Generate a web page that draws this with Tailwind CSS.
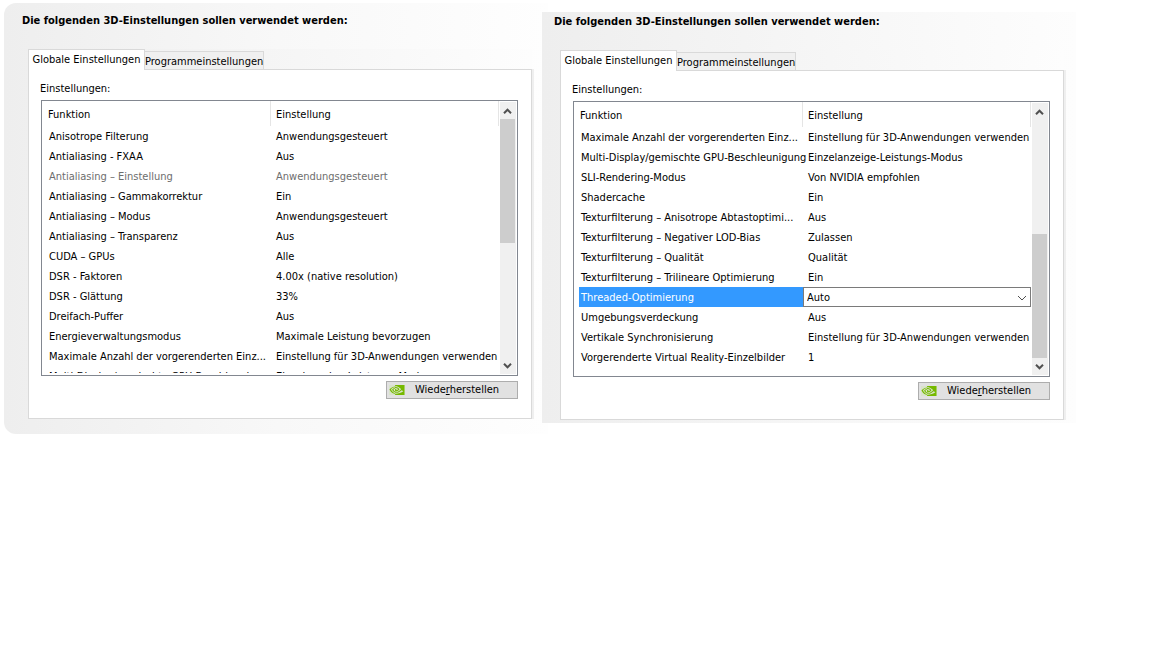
<!DOCTYPE html>
<html lang="de">
<head>
<meta charset="utf-8">
<meta name="viewport" content="width=device-width, initial-scale=1">
<title>3D-Einstellungen verwalten</title>
<script src="https://cdn.jsdelivr.net/npm/@tailwindcss/browser@4"></script>
</head>
<body class="bg-white text-black font-['DejaVu_Sans_Condensed','DejaVu_Sans',sans-serif] text-[11px] leading-[14px]">
<svg class="hidden" aria-hidden="true">
  <symbol id="nvidia" viewBox="0 4 24 16">
    <path fill="#76b900" d="M8.948 8.798v-1.43a6.7 6.7 0 0 1 .424-.018c3.922-.124 6.493 3.374 6.493 3.374s-2.774 3.851-5.75 3.851c-.398 0-.787-.062-1.158-.185v-4.346c1.528.185 1.837.857 2.747 2.385l2.04-1.714s-1.492-1.952-4-1.952a6.016 6.016 0 0 0-.796.035m0-4.735v2.138l.424-.027c5.45-.185 9.01 4.47 9.01 4.47s-4.08 4.964-8.33 4.964c-.37 0-.733-.035-1.095-.097v1.325c.3.035.61.062.91.062 3.957 0 6.82-2.023 9.593-4.408.459.371 2.34 1.263 2.73 1.652-2.633 2.208-8.772 3.984-12.253 3.984-.335 0-.653-.018-.971-.053v1.864H24V4.063zm0 10.326v1.131c-3.657-.654-4.673-4.46-4.673-4.46s1.758-1.944 4.673-2.262v1.237H8.94c-1.528-.186-2.73 1.245-2.73 1.245s.68 2.412 2.739 3.11M2.456 10.9s2.164-3.197 6.5-3.533V6.201C4.153 6.59 0 10.653 0 10.653s2.35 6.802 8.948 7.42v-1.237c-4.84-.6-6.492-5.936-6.492-5.936z"/>
  </symbol>
  <symbol id="up" viewBox="0 0 9 6"><path fill="none" stroke="#505050" stroke-width="2" d="M1 5.200 4.500 1.700l3.500 3.500"/></symbol>
  <symbol id="down" viewBox="0 0 9 6"><path fill="none" stroke="#505050" stroke-width="2" d="M1 .8l3.500 3.500L8 .8"/></symbol>
</svg>
<main class="grid grid-cols-[538fr_534fr] items-start pl-1 pr-[76px] pt-[3px]">

  <section class="-mr-[6px] rounded-l-xl bg-linear-to-r from-[#eeeeee] via-[#f8f8f8] to-[#fefefe] pt-[11px] pb-[15px] pl-6 pr-4">
    <h2 class="-ml-[6px] font-bold">Die folgenden 3D-Einstellungen sollen verwendet werden:</h2>
    <div role="tablist" class="mt-[21px] flex items-end bg-linear-to-r from-[#eeeeee] to-[#fdfdfd]">
      <button role="tab" aria-selected="true" class="relative -mb-px h-[21px] w-[117px] border border-b-0 border-[#d9d9d9] bg-white whitespace-nowrap">Globale Einstellungen</button>
      <button role="tab" aria-selected="false" class="h-[18px] w-[119px] border border-l-0 border-b-0 border-[#d9d9d9] bg-[#f0f0f0] pt-[2px] whitespace-nowrap">Programmeinstellungen</button>
    </div>
    <div class="border border-[#d9d9d9] bg-white pt-3 pb-[19px] pl-3 pr-[13px] shadow-[2px_0_0_#efefef]">
      <p class="-ml-px">Einstellungen:</p>
      <div class="mt-1 flex h-[276px] border border-[#828790] bg-white pl-[5px] pr-px">
        <div class="mb-[2px] min-w-0 flex-1 overflow-hidden">
          <table class="w-full table-fixed border-separate border-spacing-0 text-left [&_td]:h-5 [&_td]:whitespace-nowrap [&_td]:p-0 [&_td]:pt-[2px] [&_td:first-child]:pl-[2px] [&_td:last-child]:pl-[5px]">
            <thead><tr>
              <th class="h-[25px] w-[224px] border-r border-[#e5e5e5] pt-[2px] pl-px font-normal">Funktion</th>
              <th class="h-[25px] border-r border-[#e5e5e5] pt-[2px] pl-[5px] font-normal">Einstellung</th>
            </tr></thead>
            <tbody>
              <tr><td>Anisotrope Filterung</td><td>Anwendungsgesteuert</td></tr>
              <tr><td>Antialiasing - FXAA</td><td>Aus</td></tr>
              <tr class="text-[#6d6d6d]"><td>Antialiasing – Einstellung</td><td>Anwendungsgesteuert</td></tr>
              <tr><td>Antialiasing – Gammakorrektur</td><td>Ein</td></tr>
              <tr><td>Antialiasing – Modus</td><td>Anwendungsgesteuert</td></tr>
              <tr><td>Antialiasing – Transparenz</td><td>Aus</td></tr>
              <tr><td>CUDA – GPUs</td><td>Alle</td></tr>
              <tr><td>DSR - Faktoren</td><td>4.00x (native resolution)</td></tr>
              <tr><td>DSR - Glättung</td><td>33%</td></tr>
              <tr><td>Dreifach-Puffer</td><td>Aus</td></tr>
              <tr><td>Energieverwaltungsmodus</td><td>Maximale Leistung bevorzugen</td></tr>
              <tr><td>Maximale Anzahl der vorgerenderten Einz...</td><td>Einstellung für 3D-Anwendungen verwenden</td></tr>
              <tr><td>Multi-Display/gemischte GPU-Beschleunigung</td><td>Einzelanzeige-Leistungs-Modus</td></tr>
            </tbody>
          </table>
        </div>
        <div class="my-px ml-px flex w-4 flex-col bg-[#f0f0f0]">
          <button aria-label="Nach oben" class="mr-px flex h-[17px] items-center justify-center"><svg class="h-[6px] w-[9px]"><use href="#up"/></svg></button>
          <div class="mr-px h-[124px] bg-[#cdcdcd]"></div>
          <button aria-label="Nach unten" class="mt-auto mr-px flex h-[17px] items-center justify-center"><svg class="h-[6px] w-[9px]"><use href="#down"/></svg></button>
        </div>
      </div>
      <button class="mt-[5px] ml-auto flex h-[18px] w-[132px] items-center border border-[#adadad] bg-[#e1e1e1] pl-[2px] whitespace-nowrap"><svg class="h-[10px] w-4 bg-[#d9e3cb]" aria-hidden="true"><use href="#nvidia"/></svg><span class="ml-[10px]">Wiede<u>r</u>herstellen</span></button>
    </div>
  </section>

  <section class="relative mt-[9px] bg-linear-to-r from-[#eeeeee] via-[#f6f6f6] to-[#fdfdfd] pt-[3px] pb-[3px] pl-[18px] pr-3">
    <h2 class="-ml-[6px] font-bold">Die folgenden 3D-Einstellungen sollen verwendet werden:</h2>
    <div role="tablist" class="mt-[21px] flex items-end bg-linear-to-r from-[#eeeeee] to-[#fdfdfd]">
      <button role="tab" aria-selected="true" class="relative -mb-px h-[21px] w-[117px] border border-b-0 border-[#d9d9d9] bg-white whitespace-nowrap">Globale Einstellungen</button>
      <button role="tab" aria-selected="false" class="h-[18px] w-[119px] border border-l-0 border-b-0 border-[#d9d9d9] bg-[#f0f0f0] pt-[2px] whitespace-nowrap">Programmeinstellungen</button>
    </div>
    <div class="border border-[#d9d9d9] bg-white pt-3 pb-[19px] pl-3 pr-[13px] shadow-[2px_0_0_#efefef]">
      <p class="-ml-px">Einstellungen:</p>
      <div class="mt-1 flex h-[276px] border border-[#828790] bg-white pl-[5px] pr-px">
        <div class="mb-[2px] min-w-0 flex-1 overflow-hidden">
          <table class="w-full table-fixed border-separate border-spacing-0 text-left [&_td]:h-5 [&_td]:whitespace-nowrap [&_td]:p-0 [&_td]:pt-[2px] [&_td:first-child]:pl-[2px] [&_td:last-child]:pl-[5px]">
            <thead><tr>
              <th class="h-[25px] w-[224px] border-r border-[#e5e5e5] pt-[2px] pl-px font-normal">Funktion</th>
              <th class="h-[25px] border-r border-[#e5e5e5] pt-[2px] pl-[5px] font-normal">Einstellung</th>
            </tr></thead>
            <tbody>
              <tr><td>Maximale Anzahl der vorgerenderten Einz...</td><td>Einstellung für 3D-Anwendungen verwenden</td></tr>
              <tr><td>Multi-Display/gemischte GPU-Beschleunigung</td><td>Einzelanzeige-Leistungs-Modus</td></tr>
              <tr><td>SLI-Rendering-Modus</td><td>Von NVIDIA empfohlen</td></tr>
              <tr><td>Shadercache</td><td>Ein</td></tr>
              <tr><td>Texturfilterung – Anisotrope Abtastoptimi...</td><td>Aus</td></tr>
              <tr><td>Texturfilterung – Negativer LOD-Bias</td><td>Zulassen</td></tr>
              <tr><td>Texturfilterung – Qualität</td><td>Qualität</td></tr>
              <tr><td>Texturfilterung – Trilineare Optimierung</td><td>Ein</td></tr>
              <tr><td class="bg-[#3399ff] text-white"><label for="threaded">Threaded-Optimierung</label></td>
                <td class="pt-0! pl-0!"><div class="relative"><select id="threaded" class="block h-5 w-full appearance-none border border-[#7a7a7a] bg-white pt-px pl-[3px]"><option>Auto</option><option>Ein</option><option>Aus</option></select><svg class="pointer-events-none absolute top-2 right-1 h-[6px] w-[10px]" viewBox="0 0 10 6" aria-hidden="true"><path d="M1 1l4 4 4-4" fill="none" stroke="#505050"/></svg></div></td></tr>
              <tr><td>Umgebungsverdeckung</td><td>Aus</td></tr>
              <tr><td>Vertikale Synchronisierung</td><td>Einstellung für 3D-Anwendungen verwenden</td></tr>
              <tr><td>Vorgerenderte Virtual Reality-Einzelbilder</td><td>1</td></tr>
            </tbody>
          </table>
        </div>
        <div class="my-px ml-px flex w-4 flex-col bg-[#f0f0f0]">
          <button aria-label="Nach oben" class="mr-px flex h-[17px] items-center justify-center"><svg class="h-[6px] w-[9px]"><use href="#up"/></svg></button>
          <div class="mt-auto mr-px h-[124px] bg-[#cdcdcd]"></div>
          <button aria-label="Nach unten" class="mr-px flex h-[17px] items-center justify-center"><svg class="h-[6px] w-[9px]"><use href="#down"/></svg></button>
        </div>
      </div>
      <button class="mt-[5px] ml-auto flex h-[18px] w-[132px] items-center border border-[#adadad] bg-[#e1e1e1] pl-[2px] whitespace-nowrap"><svg class="h-[10px] w-4 bg-[#d9e3cb]" aria-hidden="true"><use href="#nvidia"/></svg><span class="ml-[10px]">Wiede<u>r</u>herstellen</span></button>
    </div>
  </section>
</main>
</body>
</html>
